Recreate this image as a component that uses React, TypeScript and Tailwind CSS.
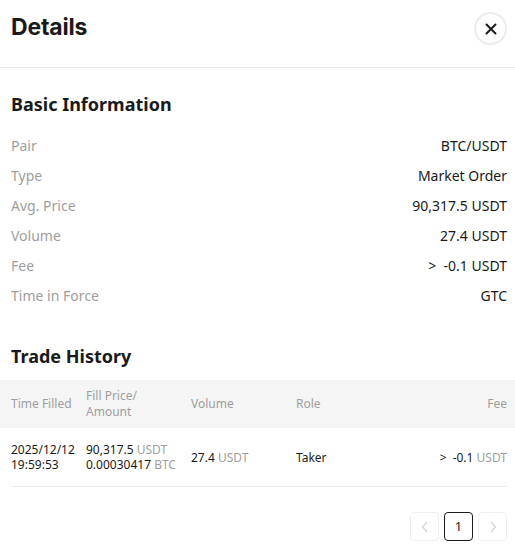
import React from "react";

const infoRows: [string, string][] = [
  ["Pair", "BTC/USDT"],
  ["Type", "Market Order"],
  ["Avg. Price", "90,317.5 USDT"],
  ["Volume", "27.4 USDT"],
  ["Fee", ">\u00a0 -0.1 USDT"],
  ["Time in Force", "GTC"],
];

export default function App() {
  return (
    <div
      className="w-[515px] h-[555px] bg-white text-[#1a1a1a] overflow-hidden"
      style={{ fontFamily: '"Noto Sans", "Open Sans", sans-serif' }}
    >
      {/* Header */}
      <div className="flex items-center justify-between h-[68px] pl-[11px] pr-[8px] border-b border-[#ebebeb]">
        <h1
          className="text-[23px] font-bold leading-none tracking-[-0.2px] mt-[-12px]"
          style={{ fontFamily: "Inter, sans-serif" }}
        >
          Details
        </h1>
        <button className="w-[33px] h-[33px] rounded-full border-2 border-[#ececec] flex items-center justify-center mt-[-10px]">
          <svg width="12" height="12" viewBox="0 0 12 12" fill="none">
            <path d="M1.5 1.5L10.5 10.5M10.5 1.5L1.5 10.5" stroke="#1a1a1a" strokeWidth="2" strokeLinecap="round" />
          </svg>
        </button>
      </div>

      {/* Basic information */}
      <div className="pl-[11px] pr-[8px]">
        <h2 className="text-[18px] font-bold leading-none mt-[27px] mb-[17px]">Basic Information</h2>
        <div className="flex flex-col">
          {infoRows.map(([k, v]) => (
            <div key={k} className="flex justify-between items-center h-[30px] text-[14px]">
              <span className="text-[#9e9e9e]">{k}</span>
              <span className="text-[#1a1a1a]">{v}</span>
            </div>
          ))}
        </div>
        <h2 className="text-[18px] font-bold leading-none mt-[37px] mb-[15px]">Trade History</h2>
      </div>

      {/* Trade table */}
      <div className="bg-[#f5f5f5] h-[48px] pl-[11px] pr-[8px] flex items-center text-[12px] text-[#9e9e9e] leading-[16px]">
        <div className="w-[75px]">Time Filled</div>
        <div className="w-[105px]">
          Fill Price/
          <br />
          Amount
        </div>
        <div className="w-[105px]">Volume</div>
        <div className="flex-1">Role</div>
        <div>Fee</div>
      </div>
      <div className="ml-[11px] mr-[8px] h-[59px] border-b border-[#ededed] flex items-center text-[12px] leading-[15px]">
        <div className="w-[75px] whitespace-nowrap">
          2025/12/12
          <br />
          19:59:53
        </div>
        <div className="w-[105px] whitespace-nowrap">
          90,317.5 <span className="text-[#9e9e9e]">USDT</span>
          <br />
          0.00030417 <span className="text-[#9e9e9e]">BTC</span>
        </div>
        <div className="w-[105px]">
          27.4 <span className="text-[#9e9e9e]">USDT</span>
        </div>
        <div className="flex-1">Taker</div>
        <div>
          {">"}
          <span className="ml-[6px]">-0.1</span> <span className="text-[#9e9e9e]">USDT</span>
        </div>
      </div>

      {/* Pagination */}
      <div className="flex justify-end gap-[5px] pr-[8px] mt-[25px]">
        <button className="w-[29px] h-[29px] rounded-[4px] border border-[#f0f0f0] flex items-center justify-center">
          <svg width="8" height="12" viewBox="0 0 8 12" fill="none">
            <path d="M6 1L1.5 6L6 11" stroke="#d4d4d4" strokeWidth="1.2" />
          </svg>
        </button>
        <button className="w-[29px] h-[29px] rounded-[4px] border border-[#1a1a1a] flex items-center justify-center text-[13px]">
          1
        </button>
        <button className="w-[29px] h-[29px] rounded-[4px] border border-[#f0f0f0] flex items-center justify-center">
          <svg width="8" height="12" viewBox="0 0 8 12" fill="none">
            <path d="M2 1L6.5 6L2 11" stroke="#d4d4d4" strokeWidth="1.2" />
          </svg>
        </button>
      </div>
    </div>
  );
}
